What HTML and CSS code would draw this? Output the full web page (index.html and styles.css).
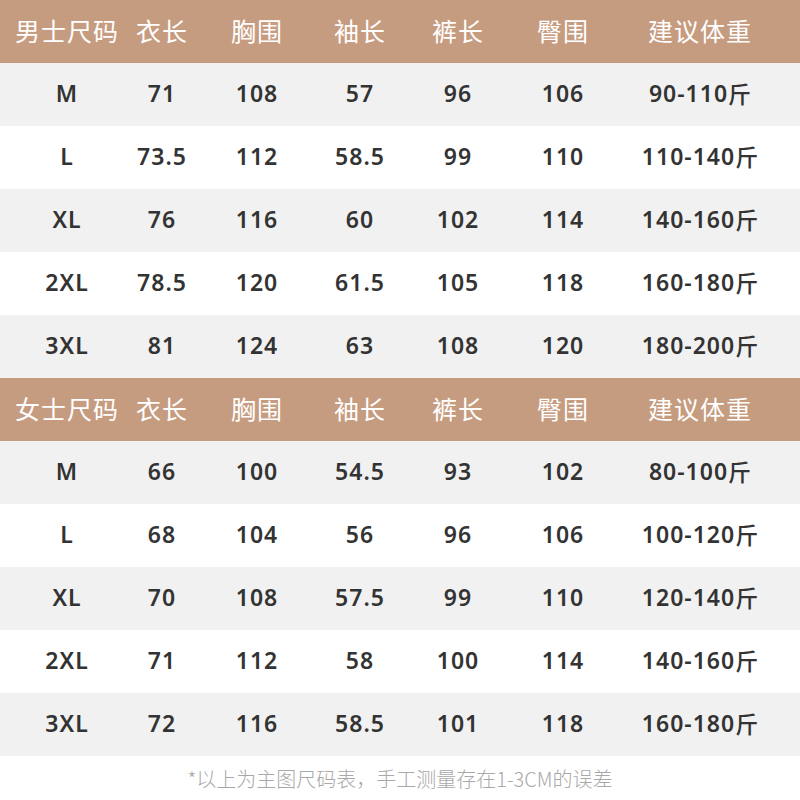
FILE: index.html
```html
<!DOCTYPE html>
<html lang="zh">
<head>
<meta charset="utf-8">
<link rel="stylesheet" href="styles.css">
</head>
<body>
<div class="page">
  <div class="row head">
    <div class="c">男士尺码</div><div class="c">衣长</div><div class="c">胸围</div><div class="c">袖长</div><div class="c">裤长</div><div class="c">臀围</div><div class="c">建议体重</div>
  </div>
  <div class="row gray"><div class="c">M</div><div class="c">71</div><div class="c">108</div><div class="c">57</div><div class="c">96</div><div class="c">106</div><div class="c">90-110<span class="j">斤</span></div></div>
  <div class="row"><div class="c">L</div><div class="c">73.5</div><div class="c">112</div><div class="c">58.5</div><div class="c">99</div><div class="c">110</div><div class="c">110-140<span class="j">斤</span></div></div>
  <div class="row gray"><div class="c">XL</div><div class="c">76</div><div class="c">116</div><div class="c">60</div><div class="c">102</div><div class="c">114</div><div class="c">140-160<span class="j">斤</span></div></div>
  <div class="row"><div class="c">2XL</div><div class="c">78.5</div><div class="c">120</div><div class="c">61.5</div><div class="c">105</div><div class="c">118</div><div class="c">160-180<span class="j">斤</span></div></div>
  <div class="row gray"><div class="c">3XL</div><div class="c">81</div><div class="c">124</div><div class="c">63</div><div class="c">108</div><div class="c">120</div><div class="c">180-200<span class="j">斤</span></div></div>
  <div class="row head">
    <div class="c">女士尺码</div><div class="c">衣长</div><div class="c">胸围</div><div class="c">袖长</div><div class="c">裤长</div><div class="c">臀围</div><div class="c">建议体重</div>
  </div>
  <div class="row gray"><div class="c">M</div><div class="c">66</div><div class="c">100</div><div class="c">54.5</div><div class="c">93</div><div class="c">102</div><div class="c">80-100<span class="j">斤</span></div></div>
  <div class="row"><div class="c">L</div><div class="c">68</div><div class="c">104</div><div class="c">56</div><div class="c">96</div><div class="c">106</div><div class="c">100-120<span class="j">斤</span></div></div>
  <div class="row gray"><div class="c">XL</div><div class="c">70</div><div class="c">108</div><div class="c">57.5</div><div class="c">99</div><div class="c">110</div><div class="c">120-140<span class="j">斤</span></div></div>
  <div class="row"><div class="c">2XL</div><div class="c">71</div><div class="c">112</div><div class="c">58</div><div class="c">100</div><div class="c">114</div><div class="c">140-160<span class="j">斤</span></div></div>
  <div class="row gray"><div class="c">3XL</div><div class="c">72</div><div class="c">116</div><div class="c">58.5</div><div class="c">101</div><div class="c">118</div><div class="c">160-180<span class="j">斤</span></div></div>
  <div class="note">*以上为主图尺码表，手工测量存在1-3CM的误差</div>
</div>
</body>
</html>
```
FILE: styles.css
```css
html, body {
  margin: 0;
  padding: 0;
  background: #ffffff;
}
.page {
  width: 800px;
  height: 800px;
  overflow: hidden;
  font-family: "Noto Sans", "Noto Sans CJK SC", sans-serif;
}
.row {
  display: grid;
  grid-template-columns: 94px 96px 94px 112px 84px 126px 148px;
  padding-left: 20px;
  height: 63px;
  background: #ffffff;
  color: #333333;
  font-size: 23px;
  font-weight: 600;
  letter-spacing: 1px;
}
.row.gray {
  background: #f1f1f1;
}
.row.head {
  background: #c69c80;
  color: #ffffff;
  font-family: "Noto Sans CJK SC", sans-serif;
  font-weight: 400;
  font-size: 25px;
  letter-spacing: 1px;
}
.c {
  display: flex;
  align-items: center;
  justify-content: center;
  white-space: nowrap;
  padding-bottom: 3px;
}
.head .c {
  padding-bottom: 4px;
}
.j {
  font-family: "Noto Sans CJK SC", sans-serif;
  font-weight: 500;
  letter-spacing: 0;
}
.note {
  height: 44px;
  display: flex;
  align-items: center;
  justify-content: center;
  color: #a8a8a8;
  font-family: "Noto Sans CJK SC", sans-serif;
  font-weight: 300;
  font-size: 20px;
}
```
